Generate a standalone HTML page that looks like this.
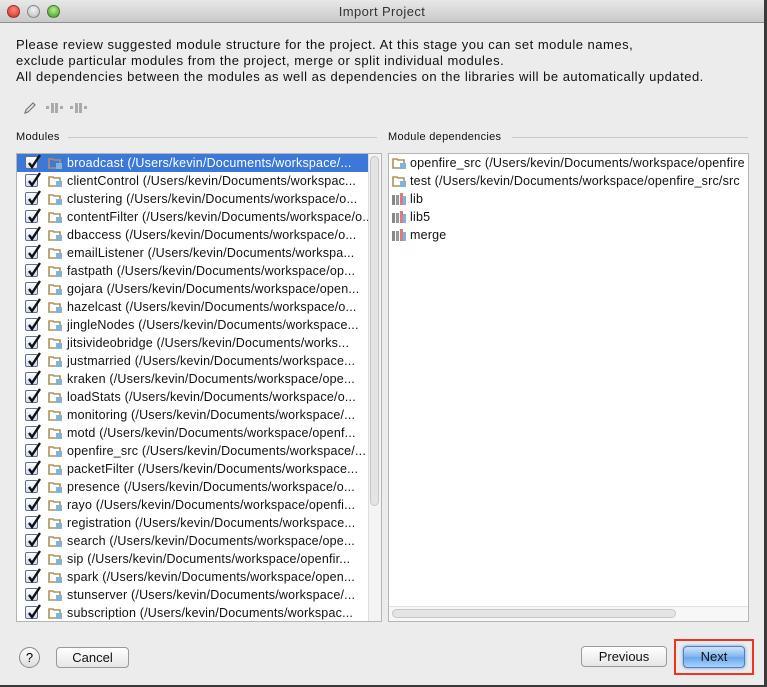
<!DOCTYPE html>
<html><head><meta charset="utf-8"><style>
*{margin:0;padding:0;box-sizing:border-box}
body{width:767px;height:687px;background:#3a3a3a;font-family:"Liberation Sans",sans-serif;position:relative;overflow:hidden}
#win{position:absolute;left:0;top:0;width:764px;height:685px;background:#ececec}
#title{position:absolute;left:0;top:0;width:764px;height:23px;background:linear-gradient(#e8e8e8,#c9c9c9);border-bottom:1px solid #8f8f8f;text-align:center;font-size:13px;line-height:23px;color:#333;letter-spacing:0.4px}
.tl{position:absolute;top:5px;width:13px;height:13px;border-radius:50%;border:1px solid rgba(0,0,0,.35)}
.intro{position:absolute;left:16px;top:37px;font-size:13px;line-height:16px;color:#111;letter-spacing:0.5px}
.lbl{position:absolute;font-size:11px;color:#111;letter-spacing:0.3px}
.line{position:absolute;height:1px;background:#c8c8c8}
.list{position:absolute;top:153px;height:469px;background:#fff;border:1px solid #b5b5b5;overflow:hidden}
.row{height:18px;font-size:12.5px;line-height:18px;white-space:nowrap;position:relative;color:#111;letter-spacing:0.2px}
.sel{background:#3b78d8;color:#fff}
.cb{position:absolute;left:8px;top:2px;width:13px;height:13px;border:1px solid #5c6f92;border-radius:2px;background:linear-gradient(#fff,#cfdcf0)}
.cb svg{position:absolute;left:0;top:-3px}
.fd{position:absolute;width:15px;height:12px;top:3px}
.btn{position:absolute;height:21px;border:1px solid #999;border-radius:4px;background:linear-gradient(#fff,#e6e6e6);font-size:13px;text-align:center;line-height:19px;color:#111}
</style></head><body>
<div id="win">
<div id="title">Import Project
<div class="tl" style="left:7px;background:radial-gradient(circle at 50% 35%,#ff8b80,#d42a1e)"></div>
<div class="tl" style="left:27px;background:radial-gradient(circle at 50% 35%,#f4f4f4,#b8b8b8)"></div>
<div class="tl" style="left:47px;background:radial-gradient(circle at 50% 35%,#b6f08a,#3a9a1e)"></div>
</div>
<div class="intro">Please review suggested module structure for the project. At this stage you can set module names,<br>exclude particular modules from the project, merge or split individual modules.<br>All dependencies between the modules as well as dependencies on the libraries will be automatically updated.</div>
<svg style="position:absolute;left:22px;top:100px" width="70" height="16">
<path d="M3 13 L4 10 L11 3 L13 5 L6 12 Z" fill="none" stroke="#777" stroke-width="1.2"/>
<g fill="#aaa"><rect x="24" y="6" width="3" height="3"/><rect x="29" y="3" width="3" height="10"/><rect x="33" y="3" width="3" height="10"/><rect x="38" y="6" width="3" height="3"/>
<rect x="48" y="6" width="3" height="3"/><rect x="53" y="3" width="3" height="10"/><rect x="57" y="3" width="3" height="10"/><rect x="62" y="6" width="3" height="3"/></g>
</svg>
<div class="lbl" style="left:16px;top:131px">Modules</div>
<div class="line" style="left:68px;top:137px;width:309px"></div>
<div class="lbl" style="left:388px;top:131px">Module dependencies</div>
<div class="line" style="left:512px;top:137px;width:236px"></div>

<div class="list" style="left:16px;width:366px" id="L">
<div style="position:absolute;right:0;top:0;width:13px;height:467px;background:#f4f4f4;border-left:1px solid #ddd"></div>
<div style="position:absolute;right:2px;top:2px;width:9px;height:350px;border-radius:5px;background:#e4e4e4;border:1px solid #c6c6c6"></div>
</div>
<div class="list" style="left:388px;width:361px" id="R">
<div style="position:absolute;left:0;bottom:0;width:100%;height:15px;background:#f7f7f7;border-top:1px solid #e2e2e2"></div>
<div style="position:absolute;left:3px;bottom:3px;width:284px;height:9px;border-radius:5px;background:#e4e4e4;border:1px solid #c6c6c6"></div>
</div>

<div style="position:absolute;left:19px;top:647px;width:21px;height:21px;border-radius:50%;border:1px solid #888;background:linear-gradient(#fff,#ddd);font-size:13px;text-align:center;line-height:19px">?</div>
<div class="btn" style="left:56px;top:647px;width:73px">Cancel</div>
<div class="btn" style="left:581px;top:646px;width:86px">Previous</div>
<div style="position:absolute;left:674px;top:639px;width:80px;height:36px;border:2px solid #f0321e"></div>
<div class="btn" style="left:683px;top:646px;width:62px;height:22px;border-color:#4f7fc4;background:linear-gradient(#cfe4fb,#7fb4ef 50%,#6aa6ec 51%,#a9d3fb);box-shadow:0 0 3px #5a9be6">Next</div>
</div>
<script>
var fold='<svg class="fd" viewBox="0 0 15 12"><path d="M1 2h4l1 1h6v8H1z" fill="none" stroke="#b39058" stroke-width="1.6"/><rect x="8" y="6" width="6" height="6" fill="#7fb3dc"/></svg>';
var lib='<svg class="fd" viewBox="0 0 15 12"><rect x="0" y="2" width="3" height="10" fill="#888"/><rect x="4" y="2" width="3" height="10" fill="#999"/><rect x="8" y="0" width="3" height="12" fill="#e07a7a"/><rect x="11" y="3" width="3" height="9" fill="#7fb3dc"/></svg>';
var cb='<span class="cb"><svg width="16" height="16"><path d="M3 9 L6 13 L14 1" fill="none" stroke="#111" stroke-width="2.4"/></svg></span>';
var mods=[["broadcast","/Users/kevin/Documents/workspace/..."],["clientControl","/Users/kevin/Documents/workspac..."],["clustering","/Users/kevin/Documents/workspace/o..."],["contentFilter","/Users/kevin/Documents/workspace/o..."],["dbaccess","/Users/kevin/Documents/workspace/o..."],["emailListener","/Users/kevin/Documents/workspa..."],["fastpath","/Users/kevin/Documents/workspace/op..."],["gojara","/Users/kevin/Documents/workspace/open..."],["hazelcast","/Users/kevin/Documents/workspace/o..."],["jingleNodes","/Users/kevin/Documents/workspace..."],["jitsivideobridge","/Users/kevin/Documents/works..."],["justmarried","/Users/kevin/Documents/workspace..."],["kraken","/Users/kevin/Documents/workspace/ope..."],["loadStats","/Users/kevin/Documents/workspace/o..."],["monitoring","/Users/kevin/Documents/workspace/..."],["motd","/Users/kevin/Documents/workspace/openf..."],["openfire_src","/Users/kevin/Documents/workspace/..."],["packetFilter","/Users/kevin/Documents/workspace..."],["presence","/Users/kevin/Documents/workspace/o..."],["rayo","/Users/kevin/Documents/workspace/openfi..."],["registration","/Users/kevin/Documents/workspace..."],["search","/Users/kevin/Documents/workspace/ope..."],["sip","/Users/kevin/Documents/workspace/openfir..."],["spark","/Users/kevin/Documents/workspace/open..."],["stunserver","/Users/kevin/Documents/workspace/..."],["subscription","/Users/kevin/Documents/workspac..."]];
var h='';mods.forEach(function(m,i){h+='<div class="row'+(i==0?' sel':'')+'" style="width:351px;overflow:hidden">'+cb+'<span style="position:absolute;left:31px;top:0">'+fold+'</span><span style="position:absolute;left:50px">'+m[0]+' ('+m[1]+'</span></div>';});
document.getElementById('L').insertAdjacentHTML('afterbegin',h);
var deps=[[fold,"openfire_src (/Users/kevin/Documents/workspace/openfire"],[fold,"test (/Users/kevin/Documents/workspace/openfire_src/src"],[lib,"lib"],[lib,"lib5"],[lib,"merge"]];
h='';deps.forEach(function(d){h+='<div class="row"><span style="position:absolute;left:3px;top:0">'+d[0]+'</span><span style="position:absolute;left:21px">'+d[1]+'</span></div>';});
document.getElementById('R').insertAdjacentHTML('afterbegin',h);
</script>
</body></html>
